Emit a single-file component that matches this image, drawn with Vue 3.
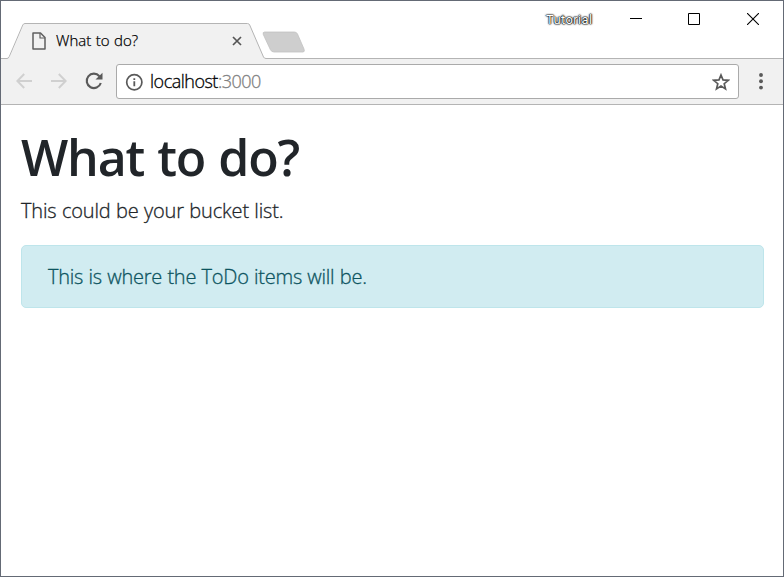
<script setup>
const tab = 'What to do?'
</script>

<template>
  <div class="window">
    <header class="titlebar">
      <div class="tab">
        <svg class="tab-shape" width="310" height="37" viewBox="0 0 310 37">
          <path d="M0 37V36H6.500Q8 36 8.800 34L22.500 2Q23 .5 24.500 .5H246.500Q248 .5 248.700 2L262.500 34Q263.300 35.500 265 35.500H310V37Z" fill="#f1f1f1" />
          <path d="M0 35.500H6Q7.500 35.500 8.300 33.500L21.800 2Q22.400 .5 24 .5H246.500Q248 .5 248.700 2L262.500 34Q263.300 35.500 265 35.500H310" fill="none" stroke="#b4b4b4" />
          <path d="M263.500 9H293.500Q295.500 9 296.500 11L303 26Q304 29 302 29H273Q270.500 29 269.300 26.500L262.300 11.500Q261.500 9 263.500 9Z" fill="#cecece" stroke="#c2c2c2" stroke-width=".8" />
        </svg>
        <div class="tab-content">
          <svg width="14" height="18" viewBox="0 0 14 18" fill="none" stroke="#5f5f5f" stroke-width="1.500" stroke-linejoin="round">
            <path d="M1 1H8.500L13 5.500V17H1Z" />
            <path d="M8 1V6H13" stroke-width="1.200" />
          </svg>
          <span class="tab-title">{{ tab }}</span>
          <svg class="tab-close" width="10" height="10" viewBox="0 0 10 10" stroke="#555" stroke-width="1.700">
            <path d="M1 1L9 9M9 1L1 9" />
          </svg>
        </div>
      </div>
      <div class="controls">
        <span class="profile">Tutorial</span>
        <svg class="min" width="12" height="12" viewBox="0 0 12 12"><path d="M0 5.500H12" stroke="#000" /></svg>
        <svg class="max" width="12" height="12" viewBox="0 0 12 12"><path d="M.5 .5H11.500V11.500H.5Z" fill="none" stroke="#000" /></svg>
        <svg class="close" width="12" height="12" viewBox="0 0 12 12"><path d="M0 0L12 12M12 0L0 12" stroke="#000" stroke-width="1.100" /></svg>
      </div>
    </header>

    <nav class="toolbar">
      <svg class="back" width="16" height="16" viewBox="0 0 16 16" fill="none" stroke="#d0d0d0" stroke-width="2"><path d="M16 8H1.500M8.200 1L1.300 8L8.200 15" /></svg>
      <svg class="forward" width="16" height="16" viewBox="0 0 16 16" fill="none" stroke="#d0d0d0" stroke-width="2"><path d="M0 8H14.500M7.800 1L14.700 8L7.800 15" /></svg>
      <svg class="reload" width="18" height="18" viewBox="0 0 18 18"><path d="M14.400 4.200A7.200 7.200 0 1 0 15.800 11" fill="none" stroke="#5a5a5a" stroke-width="2.100" /><path d="M17.500 .8V7.500H10.500Z" fill="#5a5a5a" /></svg>
      <div class="omnibox">
        <svg width="18" height="18" viewBox="0 0 18 18"><circle cx="9.300" cy="9.300" r="7.600" fill="none" stroke="#5a5a5a" stroke-width="1.700" /><path d="M9.300 8.300V13.300M9.300 5.200V6.900" stroke="#5a5a5a" stroke-width="1.800" /></svg>
        <span class="url">localhost<span class="port">:3000</span></span>
        <svg class="star" width="18" height="18" viewBox="0 0 18 18"><path d="M9 2L11 6.900L16.300 7.300L12.200 10.700L13.500 15.900L9 13.100L4.500 15.900L5.800 10.700L1.700 7.300L7 6.900Z" fill="none" stroke="#5a5a5a" stroke-width="1.700" /></svg>
      </div>
      <svg class="menu" width="4" height="18" viewBox="0 0 4 18" fill="#5a5a5a"><circle cx="2" cy="2" r="1.950" /><circle cx="2" cy="8.300" r="1.950" /><circle cx="2" cy="14.600" r="1.950" /></svg>
    </nav>

    <main class="page">
      <h1>What to do?</h1>
      <p>This could be your bucket list.</p>
      <div class="alert">This is where the ToDo items will be.</div>
    </main>
  </div>
</template>

<style>
body { margin: 0; background: #fff; }
</style>

<style scoped>
.window {
  box-sizing: border-box;
  width: 784px;
  height: 577px;
  border: 1px solid #646a75;
  background: #fff;
  font-family: "Open Sans", "Noto Sans", sans-serif;
  font-weight: 300;
  overflow: hidden;
}
svg { display: block; flex: none; }
.titlebar {
  display: flex;
  height: 58px;
  background: linear-gradient(#fff 57px, #f1f1f1 57px);
}
.titlebar, .controls { box-sizing: border-box; }
.tab {
  display: grid;
  width: 310px;
  height: 36px;
  margin-top: 22px;
}
.tab-shape, .tab-content { grid-area: 1 / 1; }
.tab-content {
  display: flex;
  align-items: center;
  height: 36px;
  padding-left: 31px;
}
.tab-title {
  width: 175px;
  margin: -1px 0 1px 10px;
  font-size: 15px;
  letter-spacing: 0;
  word-spacing: 0.6px;
  color: #000;
  -webkit-text-stroke: 0.250px;
  white-space: nowrap;
}
.tab-close { margin-left: 1px; }
.controls {
  display: flex;
  flex: 1;
  height: 58px;
  border-bottom: 1px solid #b4b4b4;
}
.profile {
  width: 84px;
  margin: 10px 0 0 235px;
  font: 13px/17px Roboto, sans-serif;
  letter-spacing: 0.350px;
  color: #fff;
  text-shadow: 0 0 1px #000, 0 0 1px #000, 0 0 2px #000, 0 0 2px #333;
}
.min, .max, .close { margin-top: 12px; }
.max { margin-left: 46px; }
.close { margin-left: 47px; }
.toolbar {
  display: flex;
  align-items: center;
  box-sizing: border-box;
  height: 46px;
  padding-left: 15px;
  background: #f1f1f1;
  border-bottom: 1px solid #b4b4b4;
}
.back, .forward, .reload { margin-top: -1px; }
.forward { margin-left: 19px; }
.reload { margin-left: 18px; }
.omnibox {
  display: flex;
  align-items: center;
  box-sizing: border-box;
  width: 623px;
  height: 35px;
  margin-left: 13px;
  padding: 0 8px;
  border: 1px solid #aaa;
  border-radius: 3px;
  background: #fff;
}
.url {
  flex: 1;
  margin: -1px 0 1px 7px;
  font-size: 18px;
  letter-spacing: -0.5px;
  color: #000;
  -webkit-text-stroke: 0.300px;
}
.port { color: #808080; }
.menu { margin-left: 20px; }
.page { padding: 22px 19px 0 20px; color: #212529; }
h1 {
  margin: 0 0 9px;
  font-size: 50px;
  font-weight: 600;
  line-height: 60px;
  letter-spacing: -1.150px;
  word-spacing: 1.200px;
}
p {
  margin: 0 0 19px;
  font-size: 20px;
  line-height: 30px;
  letter-spacing: -0.160px;
  word-spacing: 0.400px;
  -webkit-text-stroke: 0.300px;
}
.alert {
  box-sizing: border-box;
  height: 63px;
  padding: 16px 26px 14px;
  border: 1px solid #bee5eb;
  border-radius: 5px;
  background: #d1ecf1;
  color: #0c5460;
  font-size: 20px;
  line-height: 30px;
  letter-spacing: -0.240px;
  word-spacing: 0.400px;
  -webkit-text-stroke: 0.300px;
}
</style>
